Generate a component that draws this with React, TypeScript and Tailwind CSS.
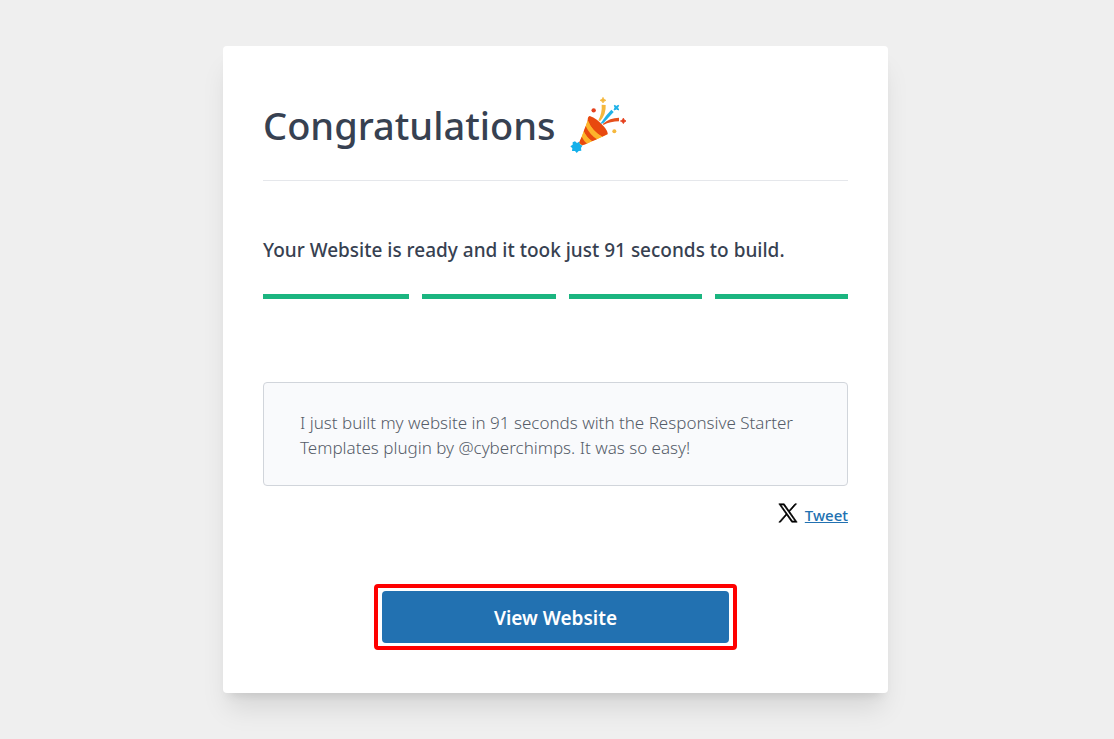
import React from 'react';

const BUILD_SECONDS = 91;
const STEPS = ['Import', 'Content', 'Customize', 'Finish'];

const READY_TEXT = `Your Website is ready and it took just ${BUILD_SECONDS} seconds to build.`;
const TWEET_TEXT = `I just built my website in ${BUILD_SECONDS} seconds with the Responsive Starter Templates plugin by @cyberchimps. It was so easy!`;

const PartyPopper: React.FC = () => (
  <svg viewBox="27 18 168 168" className="h-14 w-14 shrink-0" aria-hidden="true">
    {/* cone */}
    <path d="M86 75 L54 160 L65 163 L140 130 Z" fill="#f5b02e" />
    <path d="M86 75 Q80 76 80 88 Q94 122 124 137 L140 129 Q141 122 130 108 Q108 82 86 75 Z" fill="#e8490f" />
    <path d="M80 88 L74 105 Q86 131 108 145 L124 137 Q94 122 80 88 Z" fill="#fdb32b" />
    <path d="M74 105 L68 121 Q77 140 93 151 L108 145 Q86 131 74 105 Z" fill="#e8490f" />
    <path d="M68 121 L62 137 Q68 149 78 158 L93 151 Q77 140 68 121 Z" fill="#fdb32b" />
    <path d="M62 137 L54 155 L64 163 L78 158 Q68 149 62 137 Z" fill="#e8490f" />
    <path d="M42 151 L48 156 L54 152 L57 160 L64 164 L60 171 L61 179 L53 180 L47 186 L42 180 L33 180 L34 172 L28 166 L35 161 L35 154 Z" fill="#15b0ea" />
    {/* streamers */}
    <path d="M122 41 L134 42 Q136 69 117 91 L112 88 Q124 65 122 41 Z" fill="#f5b83d" />
    <path d="M151 56 L158 63 L127 97 L118 98 Q135 72 151 56 Z" fill="#1fb2e8" />
    <path d="M174 80 L174 91 Q149 91 127 102 L126 98 Q146 80 174 80 Z" fill="#e5501d" />
    {/* confetti */}
    <path d="M126 19 L129 25 L135 28 L129 31 L126 36 L123 31 L117 28 L123 25 Z" fill="#f5b83d" stroke="#f5b83d" strokeWidth="2" />
    <path d="M160 43 L166 46 L173 43 L170 50 L173 57 L166 54 L159 57 L162 50 Z" fill="#1fb2e8" stroke="#1fb2e8" strokeWidth="3" />
    <path d="M187 81 L190 87 L196 90 L190 93 L187 98 L184 93 L178 90 L184 87 Z" fill="#e5401d" stroke="#e5401d" strokeWidth="2" />
    <circle cx="98" cy="58" r="6.5" fill="#e5401d" />
    <circle cx="160" cy="121" r="6" fill="#f5b83d" />
  </svg>
);

const XLogo: React.FC = () => (
  <svg viewBox="0 0 24 24" className="h-5 w-5 shrink-0" fill="currentColor" aria-hidden="true">
    <path d="M14.095 10.316 22.286 1h-1.94L13.23 9.088 7.551 1H1l8.59 12.231L1 23h1.94l7.51-8.543L16.448 23H23l-8.905-12.684Zm-2.658 3.022-.872-1.218L3.64 2.432h2.98l5.59 7.82.869 1.219 7.265 10.166h-2.982l-5.926-8.3Z" stroke="currentColor" strokeWidth="0.8" />
  </svg>
);

export default function App() {
  return (
    <main className="min-h-screen bg-[#efefef] py-[46px] pr-[19px] pl-4 font-['Noto_Sans','Open_Sans',sans-serif]">
      <div className="mx-auto w-full max-w-[665px] rounded bg-white px-10 pt-[50px] pb-[43px] shadow-xl">
        {/* Header */}
        <div className="flex items-center gap-[14px] border-b border-[#e5e7eb] pb-[26px]">
          <h1 className="text-[38px] leading-[58px] font-medium text-[#374151]">Congratulations</h1>
          <PartyPopper />
        </div>

        <p className="mt-[55px] text-[19px] leading-7 font-medium text-[#374151]">{READY_TEXT}</p>

        {/* Progress */}
        <div className="mt-[30px] flex">
          {STEPS.map((step) => (
            <div key={step} className="w-1/4 pl-[13px] first:pl-0">
              <div className="h-[5px] bg-[#1bb580]" />
            </div>
          ))}
        </div>

        <div className="mt-[83px] rounded border border-[#d1d5db] bg-[#f9fafc] px-9 pt-[27px] pb-[25px]">
          <p className="text-[17px] leading-[25px] font-light text-[#555c68]">{TWEET_TEXT}</p>
        </div>

        {/* Share */}
        <div className="mt-4 flex items-start justify-end gap-[7px] text-black">
          <div className="pt-px">
            <XLogo />
          </div>
          <a href="#tweet" className="text-[15px] leading-[26px] font-medium text-[#2271b1] underline">
            Tweet
          </a>
        </div>

        {/* Call to action */}
        <div className="mx-auto mt-14 w-full max-w-[363px] rounded border-4 border-[#fe0000] px-1 py-[3px]">
          <button
            type="button"
            className="block h-[52px] w-full rounded bg-[#2271b1] pt-px text-[19px] leading-7 font-semibold text-white"
          >
            View Website
          </button>
        </div>
      </div>
    </main>
  );
}
